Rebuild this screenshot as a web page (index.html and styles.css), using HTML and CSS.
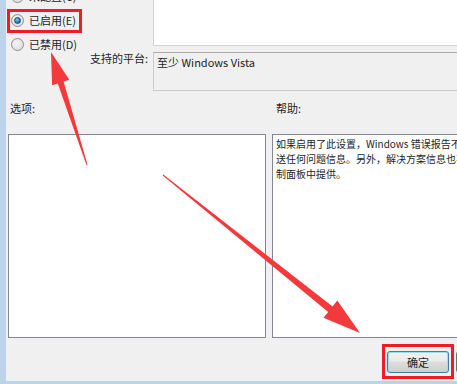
FILE: index.html
```html
<!DOCTYPE html>
<html lang="zh-CN">
<head>
    <meta charset="UTF-8">
    <title>策略设置</title>
    <link rel="stylesheet" href="styles.css">
</head>
<body>
    <div class="window">
        <div class="top">
            <ul class="states">
                <li><span class="radio"></span>未配置(C)</li>
                <li><span class="radio checked"></span>已启用(E)</li>
                <li><span class="radio"></span>已禁用(D)</li>
            </ul>
            <div class="comment"></div>
            <div class="platform-label">支持的平台:</div>
            <div class="platform">至少 Windows Vista</div>
        </div>

        <div class="captions">
            <span>选项:</span>
            <span>帮助:</span>
        </div>

        <div class="panes">
            <div class="pane"></div>
            <div class="pane help">
                如果启用了此设置，Windows 错误报告不会发<br>
                送任何问题信息。另外，解决方案信息也不会在控<br>
                制面板中提供。
            </div>
        </div>

        <div class="buttons">
            <button class="btn default">确定</button>
            <button class="btn">取消</button>
        </div>
    </div>

    <!-- annotations drawn over the dialog -->
    <svg class="marks" width="457" height="384" viewBox="0 0 457 384">
        <rect x="8.5" y="10.5" width="72" height="21" fill="none" stroke="#ee1c25" stroke-width="3"/>
        <rect x="383.5" y="345.5" width="69" height="32" fill="none" stroke="#ee1c25" stroke-width="3"/>
        <polygon fill="#f23a3c" points="51,52 69.3,79.8 63.6,81.6 87.5,164.8 86.5,165.2 57.8,83.4 52.1,85.2"/>
        <polygon fill="#f23a3c" points="360,333 323.5,317.8 328.2,311.9 162.7,175.4 163.3,174.6 332.6,306.5 337.3,300.6"/>
    </svg>
</body>
</html>
```

FILE: styles.css
```css
body {
    margin: 0;
    width: 457px;
    height: 384px;
    overflow: hidden;
    position: relative;
    background-color: #f0f0f0;
    font-family: "Segoe UI", "Noto Sans CJK SC", sans-serif;
    font-size: 11px;
    color: #1e1e1e;
}
.window {
    width: 530px;
    height: 384px;
    box-sizing: border-box;
    border-left: 6px solid #bcd3ea;
    border-bottom: 3px solid #bcd3ea;
    display: flex;
    flex-direction: column;
}
.top {
    display: grid;
    grid-template-columns: 147px 1fr;
    grid-template-rows: 46px 39px;
    row-gap: 6px;
}
.states {
    list-style: none;
    margin: -16px 0 0 0;
    padding: 0 0 0 5px;
}
.states li {
    height: 24px;
    display: flex;
    align-items: center;
    gap: 5px;
}
.radio {
    width: 11px;
    height: 11px;
    border: 1px solid #8e8f8f;
    border-radius: 50%;
    background: radial-gradient(circle at 40% 40%, #f4f4f4, #d8d8d8);
    display: flex;
    align-items: center;
    justify-content: center;
}
.radio.checked::after {
    content: "";
    width: 5px;
    height: 5px;
    border-radius: 50%;
    background: radial-gradient(circle at 40% 35%, #7ed0f4, #1d6aa5 70%);
    border: 1px solid #194f80;
}
.comment {
    background-color: #ffffff;
    border-left: 1px solid #d2d2d2;
    border-bottom: 1px solid #d2d2d2;
}
.platform-label {
    justify-self: end;
    padding-right: 5px;
    line-height: 13px;
}
.platform {
    border: 1px solid #cbcbcb;
    border-top-color: #a9a9a9;
    padding: 2px 3px 0;
    line-height: 15px;
}
.captions {
    height: 43px;
    box-sizing: border-box;
    display: grid;
    grid-template-columns: 258px 1fr;
    column-gap: 6px;
    padding: 9px 0 0 4px;
    line-height: 17px;
}
.captions span + span {
    padding-left: 2px;
}
.panes {
    height: 204px;
    display: grid;
    grid-template-columns: 258px 1fr;
    column-gap: 6px;
    padding-left: 2px;
}
.pane {
    background-color: #ffffff;
    border: 1px solid #828790;
}
.help {
    padding: 1px 3px;
    font-size: 10px;
    line-height: 15px;
    white-space: nowrap;
    overflow: hidden;
}
.buttons {
    margin-top: 13px;
    display: flex;
    justify-content: flex-end;
    gap: 7px;
    padding-right: 12px;
}
.btn {
    width: 62px;
    height: 22px;
    border: 1px solid #707070;
    border-radius: 3px;
    background: linear-gradient(#f2f2f2 0%, #ebebeb 45%, #dddddd 50%, #cfcfcf 100%);
    font-family: inherit;
    font-size: 11px;
    color: #1e1e1e;
    padding: 0;
}
.default {
    border-color: #3c7fb1;
    box-shadow: inset 0 0 0 1px #9fdcf6;
}
.marks {
    position: absolute;
    top: 0;
    left: 0;
    pointer-events: none;
}
```
